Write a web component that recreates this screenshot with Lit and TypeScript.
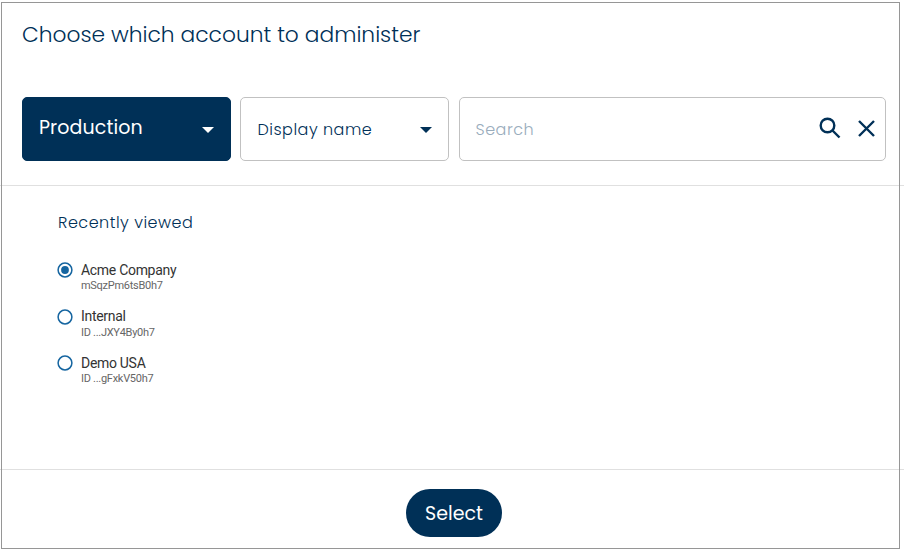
import { LitElement, html, css, svg } from "lit";
import { customElement, property, state } from "lit/decorators.js";
import { classMap } from "lit/directives/class-map.js";

interface Account {
  name: string;
  detail: string;
}

const ACCOUNTS: Account[] = [
  { name: "Acme Company", detail: "mSqzPm6tsB0h7" },
  { name: "Internal", detail: "ID ...JXY4By0h7" },
  { name: "Demo USA", detail: "ID ...gFxkV50h7" },
];

@customElement("select-box")
class SelectBox extends LitElement {
  @property() label = "";
  @property({ type: Boolean, reflect: true }) filled = false;

  static styles = css`
    :host {
      display: flex;
      align-items: center;
      justify-content: space-between;
      box-sizing: border-box;
      width: 209px;
      height: 64px;
      padding: 0 16px 0 16.5px;
      border: 1px solid #c1c1c1;
      border-radius: 5px;
      color: #003057;
      font: 300 16px/24px Poppins, Inter, sans-serif;
      letter-spacing: 0.5px;
    }
    :host([filled]) {
      padding-left: 16px;
      background: #003057;
      border-color: #003057;
      color: #fff;
      font-size: 19px;
      font-weight: 400;
      letter-spacing: 0.1px;
    }
    .label {
      padding-top: 1px;
    }
    :host([filled]) .label {
      padding: 0 0 2px;
    }
    svg {
      display: block;
      width: 12px;
      height: 6px;
      fill: currentColor;
      margin-top: 1px;
    }
  `;

  render() {
    return html`<span class="label">${this.label}</span>
      <svg viewBox="0 0 12 6"><path d="M0 0h12L6 6z" /></svg>`;
  }
}

@customElement("account-option")
class AccountOption extends LitElement {
  @property({ attribute: false }) account!: Account;
  @property({ type: Boolean }) selected = false;

  static styles = css`
    :host {
      display: flex;
      gap: 8px;
      font-family: Roboto, sans-serif;
    }
    svg {
      width: 16px;
      height: 16px;
      margin-top: 2px;
      fill: none;
      stroke: #1565a0;
      stroke-width: 1.5;
    }
    .dot {
      fill: #1565a0;
      stroke: none;
    }
    .name {
      margin: -0.15px 0 0.15px;
      font-size: 14px;
      line-height: 20px;
      letter-spacing: -0.3px;
      color: #333;
    }
    .detail {
      font-size: 11px;
      line-height: 12px;
      letter-spacing: -0.28px;
      color: #666;
    }
  `;

  render() {
    return html`<svg viewBox="0 0 16 16">
        <circle cx="8" cy="8" r="6.9" />
        ${this.selected ? svg`<circle class="dot" cx="8" cy="8" r="3.9" />` : null}
      </svg>
      <div>
        <div class="name">${this.account.name}</div>
        <div class="detail">${this.account.detail}</div>
      </div>`;
  }
}

@customElement("app-root")
class AppRoot extends LitElement {
  @state() private chosen = 0;

  static styles = css`
    :host {
      display: flex;
      flex-direction: column;
      position: relative;
      box-sizing: border-box;
      height: 550px;
      background: #fff;
      color: #003057;
      font-family: Poppins, Inter, sans-serif;
    }
    .frame {
      position: absolute;
      inset: 2px 4px 1px 1px;
      border: 1px solid #969696;
      pointer-events: none;
    }
    header {
      box-sizing: border-box;
      height: 186px;
      padding: 19px 18px 0 22px;
      border-bottom: 1px solid #e0e0e0;
    }
    h1 {
      margin: 0 0 46px;
      font-size: 21.75px;
      font-weight: 300;
      line-height: 32px;
    }
    .filters {
      display: flex;
    }
    .filters > * + * {
      margin-left: 9px;
    }
    .search {
      display: flex;
      align-items: center;
      box-sizing: border-box;
      width: 427px;
      height: 64px;
      padding: 0 10px 0 15.5px;
      border: 1px solid #c1c1c1;
      border-radius: 5px;
    }
    .filters > .search {
      margin-left: 10px;
    }
    .placeholder {
      flex: 1;
      padding-top: 1px;
      font-size: 16px;
      line-height: 24px;
      font-weight: 300;
      letter-spacing: 0.5px;
      color: #99acbc;
    }
    .search svg {
      display: block;
      margin-bottom: 2px;
      fill: none;
      stroke: #003057;
      stroke-width: 2.4;
    }
    .lens {
      width: 22px;
      height: 22px;
      margin-right: 17px;
    }
    .clear {
      width: 17px;
      height: 17px;
    }
    main {
      box-sizing: border-box;
      height: 284px;
      padding: 25px 57px 0;
      border-bottom: 1px solid #e0e0e0;
    }
    h2 {
      margin: 0 0 25px 1px;
      font-size: 16px;
      font-weight: 300;
      line-height: 24px;
      letter-spacing: 0.5px;
    }
    .accounts {
      display: flex;
      flex-direction: column;
      gap: 14.5px;
    }
    footer {
      display: flex;
      justify-content: center;
      padding: 19px 0 0 4px;
    }
    button {
      width: 96px;
      height: 48px;
      padding: 1px 0 0;
      border: 0;
      border-radius: 24px;
      background: #003057;
      color: #fff;
      font: 400 19px/47px Poppins, Inter, sans-serif;
    }
  `;

  render() {
    return html`
      <header>
        <h1>Choose which account to administer</h1>
        <div class="filters">
          <select-box filled label="Production"></select-box>
          <select-box label="Display name"></select-box>
          <div class="search">
            <span class="placeholder">Search</span>
            <svg class="lens" viewBox="0 0 22 22">
              <circle cx="8.5" cy="8.5" r="6.8" />
              <path d="M13.5 13.5L20.5 20.5" />
            </svg>
            <svg class="clear" viewBox="0 0 17 17">
              <path d="M1 1L16 16M16 1L1 16" />
            </svg>
          </div>
        </div>
      </header>
      <main>
        <h2>Recently viewed</h2>
        <div class="accounts">
          ${ACCOUNTS.map(
            (account, i) => html`<account-option
              class=${classMap({ active: i === this.chosen })}
              .account=${account}
              ?selected=${i === this.chosen}
              @click=${() => (this.chosen = i)}
            ></account-option>`
          )}
        </div>
      </main>
      <footer><button>Select</button></footer>
      <div class="frame"></div>
    `;
  }
}
